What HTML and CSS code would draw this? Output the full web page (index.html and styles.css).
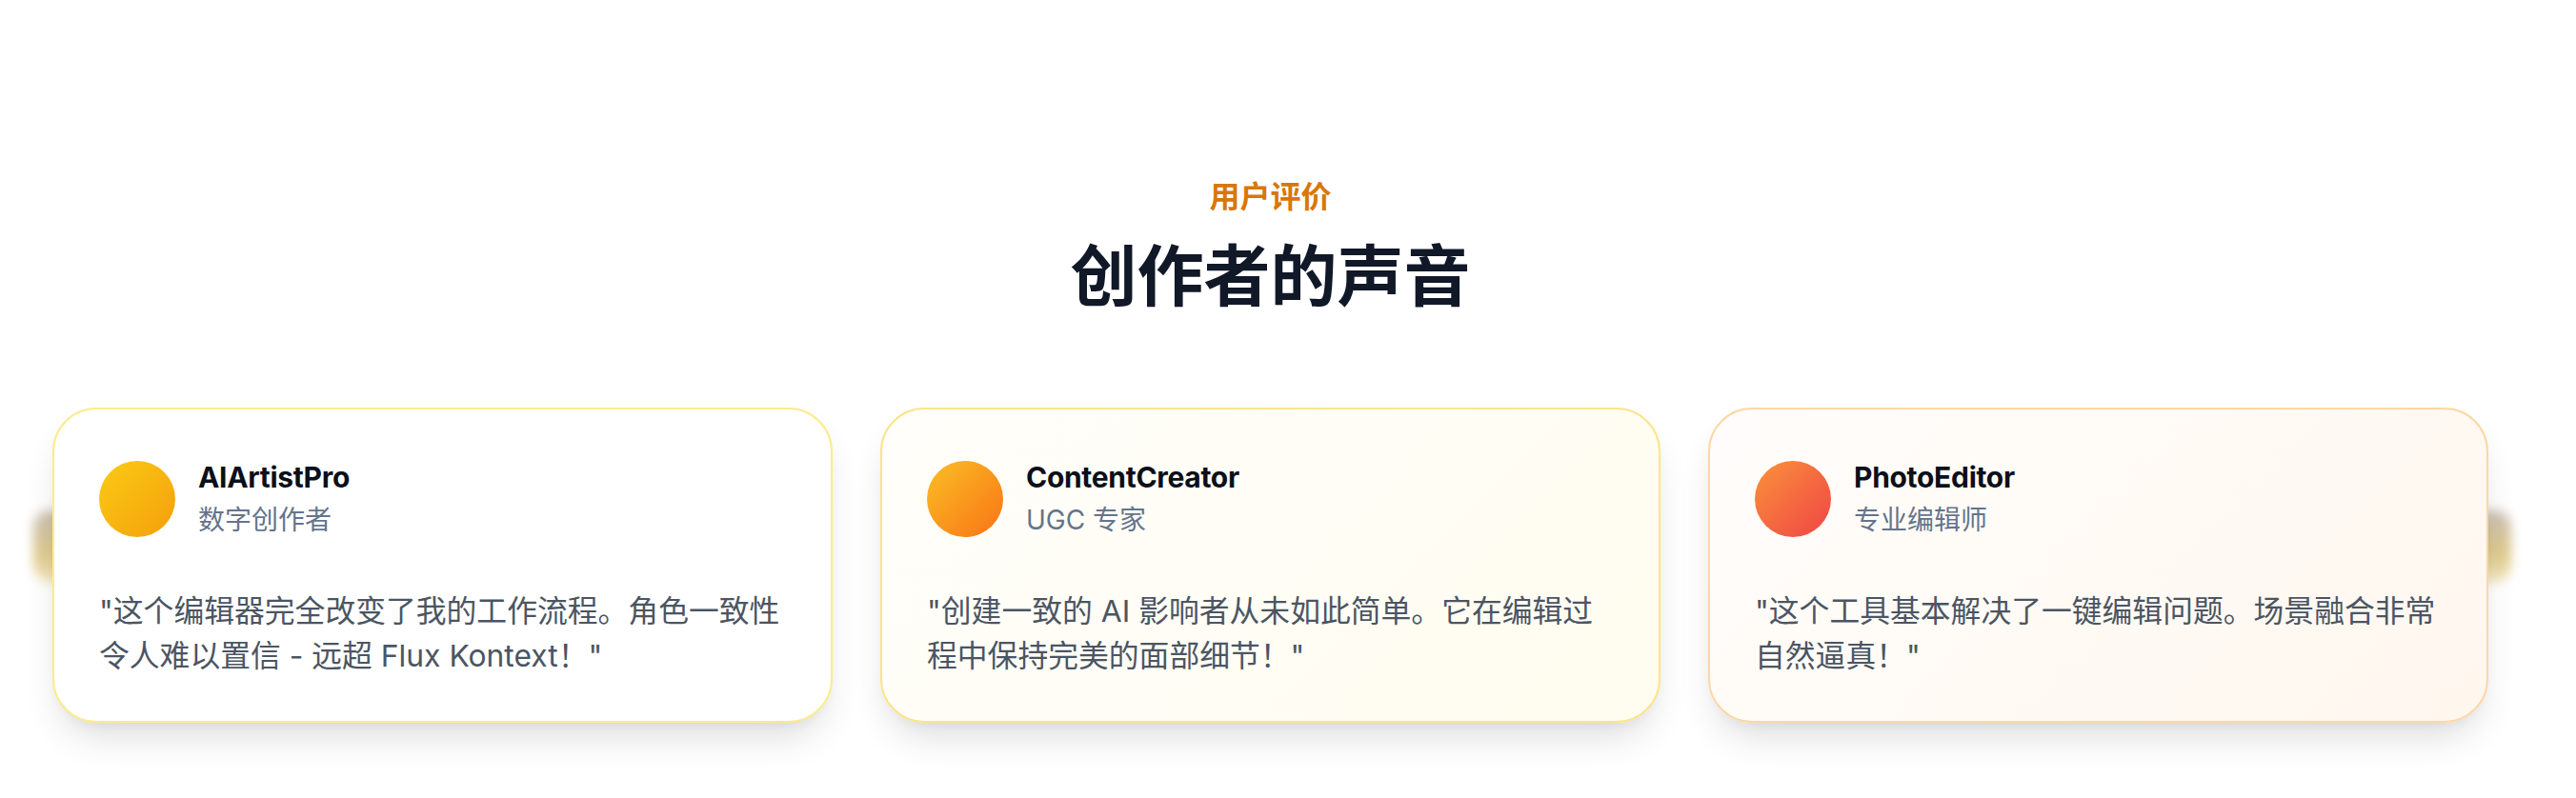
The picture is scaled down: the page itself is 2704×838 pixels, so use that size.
FILE: index.html
```html
<!DOCTYPE html>
<html lang="zh-CN">
<head>
<meta charset="utf-8">
<title>创作者的声音</title>
<link rel="stylesheet" href="styles.css">
</head>
<body>
<section class="testimonials">
  <div class="container">
    <p class="eyebrow">用户评价</p>
    <h2 class="title">创作者的声音</h2>
    <div class="grid-wrap">
      <div class="glow glow-left"></div>
      <div class="glow glow-right"></div>
      <div class="grid">
        <article class="card card-yellow">
          <header class="card-head">
            <div class="avatar avatar-yellow"></div>
            <div class="who">
              <div class="name">AIArtistPro</div>
              <div class="role">数字创作者</div>
            </div>
          </header>
          <p class="quote">"这个编辑器完全改变了我的工作流程。角色一致性令人难以置信 - 远超 Flux Kontext！"</p>
        </article>
        <article class="card card-amber">
          <header class="card-head">
            <div class="avatar avatar-amber"></div>
            <div class="who">
              <div class="name">ContentCreator</div>
              <div class="role">UGC 专家</div>
            </div>
          </header>
          <p class="quote">"创建一致的 AI 影响者从未如此简单。它在编辑过程中保持完美的面部细节！"</p>
        </article>
        <article class="card card-orange">
          <header class="card-head">
            <div class="avatar avatar-orange"></div>
            <div class="who">
              <div class="name">PhotoEditor</div>
              <div class="role">专业编辑师</div>
            </div>
          </header>
          <p class="quote">"这个工具基本解决了一键编辑问题。场景融合非常自然逼真！"</p>
        </article>
      </div>
    </div>
  </div>
</section>
</body>
</html>
```

FILE: styles.css
```css
* { box-sizing: border-box; }

html, body {
  margin: 0;
  padding: 0;
  background: #ffffff;
}

body {
  font-family: "Inter", "Noto Sans CJK SC", "Noto Sans", sans-serif;
  color: #111827;
}

.testimonials {
  padding: 184px 0 80px;
}

.container {
  width: 2557px;
  margin-left: 55px;
  text-align: center;
}

.eyebrow {
  margin: 0 0 18px;
  font-size: 32px;
  line-height: 46px;
  font-weight: 600;
  color: #d97706;
}

.title {
  margin: 0 0 94px;
  font-size: 70px;
  line-height: 86px;
  font-weight: 700;
  color: #111827;
}

.grid-wrap {
  position: relative;
}

.glow {
  position: absolute;
  top: 108px;
  width: 40px;
  height: 76px;
  border-radius: 18px;
  background: linear-gradient(180deg, rgba(150, 130, 110, 0.5) 0%, rgba(210, 180, 90, 0.7) 60%, rgba(230, 200, 110, 0.4) 100%);
  filter: blur(6px);
  z-index: 0;
}

.glow-left { left: -20px; }
.glow-right { right: -24px; }

.grid {
  position: relative;
  z-index: 1;
  display: grid;
  grid-template-columns: repeat(3, 819px);
  gap: 50px;
  text-align: left;
}

.card {
  height: 331px;
  padding: 51px 48px 48px 47px;
  border: 2px solid #fef08a;
  border-radius: 46px;
  background: #ffffff;
  box-shadow: 0 22px 40px -12px rgba(0, 0, 0, 0.16), 0 6px 14px -6px rgba(0, 0, 0, 0.06);
}

.card-yellow {
  border-color: #fdeb8c;
  background: #ffffff;
}

.card-amber {
  border-color: #fde48a;
  background: linear-gradient(135deg, #fffefa 0%, #fffcef 100%);
}

.card-orange {
  border-color: #fed7a6;
  background: linear-gradient(135deg, #fffdfb 0%, #fff7ee 100%);
}

.card-head {
  display: flex;
  align-items: center;
  gap: 24px;
  margin-bottom: 52px;
}

.avatar {
  flex: none;
  width: 80px;
  height: 80px;
  border-radius: 50%;
}

.avatar-yellow { background: linear-gradient(135deg, #facc15 0%, #f59e0b 100%); }
.avatar-amber { background: linear-gradient(135deg, #fbbf24 0%, #f97316 100%); }
.avatar-orange { background: linear-gradient(135deg, #fb923c 0%, #ef4444 100%); }

.who {
  display: flex;
  flex-direction: column;
}

.name {
  font-size: 30px;
  line-height: 40px;
  font-weight: 700;
  color: #0b0f1a;
  letter-spacing: -0.3px;
}

.role {
  margin-top: 5px;
  font-size: 28px;
  line-height: 40px;
  color: #64748b;
}

.quote {
  margin: 0;
  font-size: 31.8px;
  line-height: 47px;
  color: #4b5563;
}
```
